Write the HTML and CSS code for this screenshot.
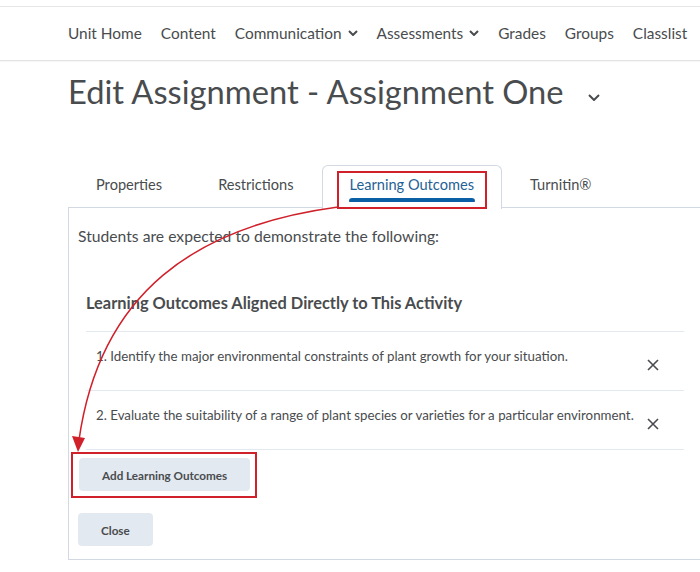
FILE: index.html
```html
<!DOCTYPE html>
<html lang="en">
  <head>
    <meta charset="UTF-8" />
    <meta name="viewport" content="width=device-width, initial-scale=1.0" />
    <title>Edit Assignment - Assignment One</title>
    <link rel="stylesheet" href="styles.css">
  </head>
  <body>
    <header class="navbar">
      <nav class="nav-links">
        <a href="#">Unit Home</a>
        <a href="#">Content</a>
        <a href="#" class="has-menu">Communication
          <svg class="nav-chevron" viewBox="0 0 10 6"><path d="M1 1l4 4 4-4" /></svg>
        </a>
        <a href="#" class="has-menu">Assessments
          <svg class="nav-chevron" viewBox="0 0 10 6"><path d="M1 1l4 4 4-4" /></svg>
        </a>
        <a href="#">Grades</a>
        <a href="#">Groups</a>
        <a href="#">Classlist</a>
      </nav>
    </header>

    <main class="page">
      <h1 class="page-title">
        Edit Assignment - Assignment One
        <svg class="title-chevron" viewBox="0 0 12 7"><path d="M1 1l5 5 5-5" /></svg>
      </h1>

      <div class="tabs">
        <div class="tab">Properties</div>
        <div class="tab">Restrictions</div>
        <div class="tab active">
          <span class="callout tab-callout">
            <span class="tab-label">Learning Outcomes</span>
            <span class="tab-bar"></span>
          </span>
        </div>
        <div class="tab">Turnitin®</div>
      </div>

      <section class="panel">
        <p class="intro">Students are expected to demonstrate the following:</p>

        <div class="outcomes">
          <h2>Learning Outcomes Aligned Directly to This Activity</h2>
          <ul class="outcome-list">
            <li>
              <span class="outcome-text">1. Identify the major environmental constraints of plant growth for your situation.</span>
              <button class="remove" aria-label="Remove">
                <svg viewBox="0 0 12 12"><path d="M1 1l10 10M11 1L1 11" /></svg>
              </button>
            </li>
            <li>
              <span class="outcome-text">2. Evaluate the suitability of a range of plant species or varieties for a particular environment.</span>
              <button class="remove" aria-label="Remove">
                <svg viewBox="0 0 12 12"><path d="M1 1l10 10M11 1L1 11" /></svg>
              </button>
            </li>
          </ul>
        </div>

        <div class="callout button-callout">
          <button class="btn">Add Learning Outcomes</button>
        </div>
        <div class="close-row">
          <button class="btn btn-close">Close</button>
        </div>
      </section>
    </main>

    <!-- annotation arrow from the tab to the add button -->
    <svg class="annotation" viewBox="0 0 700 572">
      <path d="M338 207 C196 226 100 292 79 440" />
      <polygon points="72,436 85,438 78,452" />
    </svg>
  </body>
</html>
```

FILE: styles.css
```css
body {
  margin: 0;
  padding: 0;
  background: white;
  color: #494c4e;
  font-family: Lato, "Noto Sans", sans-serif;
  overflow: hidden;
  position: relative;
}

.navbar {
  margin-top: 6px;
  height: 53px;
  border-top: 1px solid #e6e6e6;
  border-bottom: 1px solid #e3e3e3;
  box-shadow: 0 1px 1px rgba(0, 0, 0, 0.03);
  display: flex;
  align-items: center;
  padding-left: 68px;
}
.nav-links {
  display: flex;
  align-items: center;
  gap: 19px;
  white-space: nowrap;
}
.nav-links a {
  color: #494c4e;
  text-decoration: none;
  font-size: 15.4px;
  display: flex;
  align-items: center;
  margin-top: -2px;
}
.nav-chevron {
  width: 10px;
  height: 6px;
  margin-left: 6px;
  fill: none;
  stroke: #494c4e;
  stroke-width: 2;
}

.page {
  padding-left: 68px;
}
.page-title {
  margin: 11px 0 0;
  font-size: 32.7px;
  line-height: 40px;
  font-weight: 400;
  white-space: nowrap;
  display: flex;
  align-items: center;
}
.title-chevron {
  width: 12px;
  height: 7px;
  margin: 10px 0 0 24px;
  fill: none;
  stroke: #494c4e;
  stroke-width: 2;
}

.tabs {
  margin-top: 53px;
  display: flex;
  height: 42px;
  position: relative;
  z-index: 1;
}
.tab {
  padding: 8px 28px 0;
  font-size: 14.6px;
  line-height: 24px;
  white-space: nowrap;
}
.tab.active {
  padding: 5px 14px 0;
  border: 1px solid #d3d9e3;
  border-bottom: none;
  border-radius: 6px 6px 0 0;
  background: white;
  height: 38px;
  margin-bottom: -1px;
}

.callout {
  border: 2px solid #d0212b;
}
.tab-callout {
  display: flex;
  flex-direction: column;
  align-items: center;
  padding: 0 11px;
  height: 34px;
}
.tab-label {
  color: #1f6296;
  line-height: 24px;
}
.tab-bar {
  display: block;
  width: calc(100% + 2px);
  height: 4px;
  margin-top: 1px;
  background: #0b5fa5;
  border-radius: 4px 4px 1px 1px;
}

.panel {
  border: 1px solid #d3d9e3;
  border-right: none;
  padding: 16px 0 13px 9px;
}
.intro {
  margin: 0;
  font-size: 15.7px;
  line-height: 24px;
}

.outcomes {
  margin: 43px 16px 0 8px;
}
.outcomes h2 {
  margin: 0 0 16px;
  font-size: 16.4px;
  line-height: 24px;
  font-weight: 700;
}
.outcome-list {
  list-style: none;
  margin: 0;
  padding: 0;
  border-bottom: 1px solid #e3e9f1;
}
.outcome-list li {
  border-top: 1px solid #e3e9f1;
  padding: 14px 25px 0 10px;
  box-sizing: border-box;
  height: 59px;
  display: flex;
  align-items: flex-start;
  justify-content: space-between;
}
.outcome-text {
  font-size: 13.3px;
  line-height: 20px;
}
.remove {
  border: none;
  background: none;
  padding: 0;
  margin-top: 13px;
  width: 12px;
  height: 12px;
  display: flex;
}
.remove svg {
  width: 12px;
  height: 12px;
  fill: none;
  stroke: #494c4e;
  stroke-width: 1.6;
}

.button-callout {
  display: inline-block;
  margin: 2px 0 0 -7px;
  padding: 4px 5px 5px 6px;
}
.btn {
  background: #e3e9f1;
  border: none;
  border-radius: 4px;
  color: #494c4e;
  font-family: Lato, "Noto Sans", sans-serif;
  font-weight: 700;
  font-size: 11.7px;
  height: 33px;
  padding: 0 23px;
  display: block;
}
.close-row {
  margin-top: 15px;
}
.btn-close {
  padding: 0 23px;
}

.annotation {
  position: absolute;
  top: 0;
  left: 0;
  width: 700px;
  height: 572px;
  pointer-events: none;
  z-index: 5;
}
.annotation path {
  fill: none;
  stroke: #d0212b;
  stroke-width: 1.5;
}
.annotation polygon {
  fill: #d0212b;
}
```
